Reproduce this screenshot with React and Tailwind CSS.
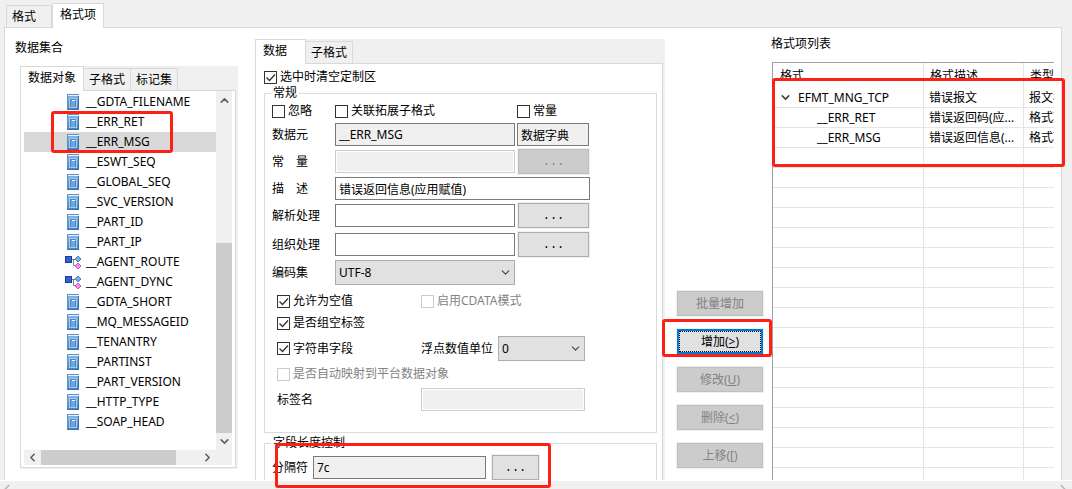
import { useState } from "react";
import { ChevronDown, ChevronLeft, ChevronRight, ChevronUp } from "lucide-react";
import clsx from "clsx";

const DATA_OBJECTS = [
  { name: "__GDTA_FILENAME" },
  { name: "__ERR_RET" },
  { name: "__ERR_MSG" },
  { name: "__ESWT_SEQ" },
  { name: "__GLOBAL_SEQ" },
  { name: "__SVC_VERSION" },
  { name: "__PART_ID" },
  { name: "__PART_IP" },
  { name: "__AGENT_ROUTE", node: true },
  { name: "__AGENT_DYNC", node: true },
  { name: "__GDTA_SHORT" },
  { name: "__MQ_MESSAGEID" },
  { name: "__TENANTRY" },
  { name: "__PARTINST" },
  { name: "__PART_VERSION" },
  { name: "__HTTP_TYPE" },
  { name: "__SOAP_HEAD" },
];

const FORMAT_ROWS = [
  { name: "EFMT_MNG_TCP", desc: "错误报文", type: "报文格式", root: true },
  { name: "__ERR_RET", desc: "错误返回码(应...", type: "格式项" },
  { name: "__ERR_MSG", desc: "错误返回信息(...", type: "格式项" },
];

const EMPTY_ROWS = Array.from({ length: 18 }, (_, i) => i);

function BookIcon() {
  return (
    <svg width="12" height="16" viewBox="0 0 12 16" aria-hidden="true">
      <defs>
        <linearGradient id="book" x1="0" y1="0" x2="0" y2="1">
          <stop offset="0" stopColor="#8abbe6" />
          <stop offset="1" stopColor="#4482c2" />
        </linearGradient>
      </defs>
      <rect width="12" height="16" fill="url(#book)" />
      <path d="M0 0.5h12" stroke="#5b93c9" />
      <path d="M1 1.5h11" stroke="#e8f3fc" />
      <path d="M0.5 0v16" stroke="#5a92ca" />
      <path d="M11.5 2v14M0 15.5h12" stroke="#3a72b0" />
      <rect x="2.5" y="4.5" width="7" height="9" fill="#6ba6dc" stroke="#a4cbee" />
      <path d="M3.5 13V5.5h5V13" fill="none" stroke="#4a86c4" />
      <path d="M5 6.5h3" stroke="#fff" />
    </svg>
  );
}

function NodeIcon() {
  return (
    <svg width="17" height="15" viewBox="0 0 17 15" aria-hidden="true">
      <path d="M7 4.5h3M8.5 4.5v6h2" stroke="#777f8c" fill="none" />
      <rect x="0.5" y="1.5" width="6" height="6" fill="#2f63d0" stroke="#17409c" />
      <path d="M13 1l3 3-3 3-3-3z" fill="#6db2ea" stroke="#2b6cab" strokeWidth="0.8" />
      <path d="M13 8l3 3-3 3-3-3z" fill="#ff8df0" stroke="#b93caa" strokeWidth="0.8" />
    </svg>
  );
}

function Tabs({ items, active, onChange, className }) {
  return (
    <div role="tablist" className={clsx("flex items-end bg-[#f0f0f0]", className)}>
      {items.map((item) => (
        <button
          key={item}
          role="tab"
          aria-selected={item === active}
          onClick={() => onChange(item)}
          className={clsx(
            "border border-b-0 border-[#d9d9d9] text-left",
            item === active
              ? "relative z-10 -mb-px h-[25px] min-w-[51px] bg-white px-[7px] pb-0.5"
              : "h-[22px] min-w-[46px] border-l-0 px-[5px] first:border-l"
          )}
        >
          {item}
        </button>
      ))}
    </div>
  );
}

function Checkbox({ label, defaultChecked, disabled, className }) {
  return (
    <label className={clsx("flex items-center gap-[3px]", disabled && "text-[#838383]", className)}>
      <span className="relative flex size-[13px]">
        <input
          type="checkbox"
          defaultChecked={defaultChecked}
          disabled={disabled}
          className="peer size-[13px] appearance-none border border-[#333] bg-white disabled:border-[#ccc]"
        />
        <svg
          viewBox="0 0 13 13"
          className="pointer-events-none absolute inset-0 hidden peer-checked:block"
          fill="none"
          stroke="#333"
          strokeWidth="1.3"
        >
          <path d="M2.5 6.5l3 3 5.5-6" />
        </svg>
      </span>
      {label}
    </label>
  );
}

function TextBox({ className, ...props }) {
  return (
    <input
      type="text"
      className={clsx(
        "h-[23px] min-w-0 border border-[#7a7a7a] bg-white px-[3px] read-only:bg-[#f0f0f0] disabled:border-[#ccc] disabled:bg-[#f0f0f0] disabled:shadow-[inset_0_0_0_1px_#fff]",
        className
      )}
      {...props}
    />
  );
}

function Combo({ id, value, className }) {
  return (
    <span className={clsx("relative flex", className)}>
      <select id={id} defaultValue={value} className="h-[25px] w-full appearance-none border border-[#adadad] bg-[#e1e1e1] px-[3px]">
        <option>{value}</option>
      </select>
      <ChevronDown size={13} strokeWidth={2} className="pointer-events-none absolute top-1.5 right-[3px] text-[#444]" />
    </span>
  );
}

function Button({ children, primary, className, ...props }) {
  return (
    <button
      className={clsx(
        "h-[25px] bg-[#e1e1e1] shadow-[0_0_0_1px_#f0f0f0] disabled:border-[#bfbfbf] disabled:bg-[#ccc] disabled:text-[#838383]",
        primary
          ? "border-2 border-[#0078d7] outline-1 -outline-offset-3 outline-dotted outline-black"
          : "border border-[#adadad]",
        className
      )}
      {...props}
    >
      {children}
    </button>
  );
}

function BrowseButton({ className, ...props }) {
  return (
    <Button aria-label="浏览" className={clsx("font-['Liberation_Mono',monospace]", className)} {...props}>
      ...
    </Button>
  );
}

function Field({ id, label, children }) {
  return (
    <div className="flex h-[27px] items-center">
      <label htmlFor={id} className="w-[63px] shrink-0">{label}</label>
      {children}
    </div>
  );
}

function DataSet() {
  const [tab, setTab] = useState("数据对象");
  const [selected, setSelected] = useState("__ERR_MSG");

  return (
    <section className="w-[223px] shrink-0 pt-3">
      <h2>数据集合</h2>
      <div className="mt-2.5 ml-[5px] bg-[#f0f0f0] pr-0.5 pb-px">
        <Tabs items={["数据对象", "子格式", "标记集"]} active={tab} onChange={setTab} className="h-6" />
        <div className="border border-[#d9d9d9] bg-white px-[3px] pb-0.5">
          <div className="flex">
            <ul className="min-w-0 flex-1 pt-px pb-[18px]">
              {DATA_OBJECTS.map(({ name, node }) => (
                <li key={name}>
                  <button
                    onClick={() => setSelected(name)}
                    className={clsx("flex h-5 w-full items-center pl-[41px]", selected === name && "bg-[#d9d9d9]")}
                  >
                    <span className="flex w-[21px] justify-start">
                      {node ? <NodeIcon /> : <span className="pl-0.5"><BookIcon /></span>}
                    </span>
                    {name}
                  </button>
                </li>
              ))}
            </ul>
            <div className="flex w-4 flex-col items-center bg-[#f0f0f0] text-[#606060]">
              <ChevronUp size={13} strokeWidth={3} className="mt-[3px]" />
              <div className="mt-auto h-[190px] w-full bg-[#cdcdcd]" />
              <ChevronDown size={13} strokeWidth={3} className="my-0.5" />
            </div>
          </div>
          <div className="flex h-[15px] items-center bg-[#f0f0f0] pr-[18px] text-[#606060]">
            <ChevronLeft size={13} strokeWidth={3} className="mx-0.5" />
            <div className="h-full w-[135px] bg-[#cdcdcd]" />
            <ChevronRight size={13} strokeWidth={3} className="ml-auto" />
          </div>
        </div>
      </div>
    </section>
  );
}

function ItemForm() {
  const [tab, setTab] = useState("数据");

  return (
    <section className="ml-[17px] min-w-0 flex-[410] pt-[11px]">
      <Tabs items={["数据", "子格式"]} active={tab} onChange={setTab} className="h-6" />
      <div className="bg-[#f0f0f0] pr-0.5">
        <div className="border border-[#d9d9d9] bg-white pt-[5px] pr-[5px] pl-2">
          <Checkbox label="选中时清空定制区" defaultChecked className="h-4" />
          <fieldset className="border border-[#dcdcdc] px-[7px] pb-[19px]">
            <legend className="-ml-px h-4 px-0.5">常规</legend>
            <div className="flex h-[20px] items-center">
              <Checkbox label="忽略" className="w-[63px]" />
              <Checkbox label="关联拓展子格式" className="w-[182px]" />
              <Checkbox label="常量" />
            </div>
            <Field id="element" label="数据元">
              <TextBox id="element" readOnly defaultValue="__ERR_MSG" className="w-[180px]" />
              <TextBox aria-label="来源" readOnly defaultValue="数据字典" className="ml-0.5 w-[72px]" />
            </Field>
            <Field id="constant" label="常　量">
              <TextBox id="constant" disabled className="w-[180px]" />
              <BrowseButton disabled className="ml-[3px] w-[71px]" />
            </Field>
            <Field id="desc" label="描　述">
              <TextBox id="desc" defaultValue="错误返回信息(应用赋值)" className="w-[255px]" />
            </Field>
            <Field id="parse" label="解析处理">
              <TextBox id="parse" className="w-[180px]" />
              <BrowseButton className="ml-[3px] w-[71px]" />
            </Field>
            <div className="mt-0.5">
              <Field id="compose" label="组织处理">
                <TextBox id="compose" className="w-[180px]" />
                <BrowseButton className="ml-[3px] w-[71px]" />
              </Field>
            </div>
            <div className="mt-px">
              <Field id="charset" label="编码集">
                <Combo id="charset" value="UTF-8" className="w-[180px]" />
              </Field>
            </div>
            <div className="mt-1 pl-[5px]">
              <div className="flex h-[22px] items-center">
                <Checkbox label="允许为空值" defaultChecked className="w-36" />
                <Checkbox label="启用CDATA模式" disabled />
              </div>
              <Checkbox label="是否组空标签" defaultChecked className="h-[22px]" />
              <div className="mt-px flex h-[27px] items-center">
                <Checkbox label="字符串字段" defaultChecked className="w-36" />
                <label htmlFor="unit" className="w-[77px]">浮点数值单位</label>
                <Combo id="unit" value="0" className="w-[87px]" />
              </div>
              <Checkbox label="是否自动映射到平台数据对象" disabled className="mt-px h-[22px]" />
              <div className="mt-px flex h-[27px] items-center">
                <label htmlFor="tag" className="w-36">标签名</label>
                <TextBox id="tag" disabled className="w-[164px]" />
              </div>
            </div>
          </fieldset>
          <fieldset className="mt-0.5 border border-[#dcdcdc] px-[7px] pb-4">
            <legend className="-ml-px h-4 px-0.5">字段长度控制</legend>
            <div className="mt-[3px] flex h-[27px] items-center">
              <label htmlFor="separator" className="w-[41px]">分隔符</label>
              <TextBox id="separator" readOnly defaultValue="7c" className="w-[173px]" />
              <BrowseButton className="ml-1.5 w-[47px]" />
            </div>
          </fieldset>
        </div>
      </div>
    </section>
  );
}

function Actions() {
  return (
    <div className="mt-[263px] ml-3 flex w-[86px] shrink-0 flex-col gap-[13px]">
      <Button disabled>批量增加</Button>
      <Button primary>增加(<u>&gt;</u>)</Button>
      <Button disabled>修改(<u>U</u>)</Button>
      <Button disabled>删除(<u>&lt;</u>)</Button>
      <Button disabled>上移(<u>[</u>)</Button>
    </div>
  );
}

function FormatList() {
  return (
    <section className="mr-[7px] ml-2 min-w-0 flex-[283] pt-2">
      <h2>格式项列表</h2>
      <div className="mt-2.5 ml-px overflow-hidden border-t border-l border-[#a0a0a0]">
        <table className="w-[351px] table-fixed border-separate border-spacing-0 text-left">
          <thead>
            <tr className="h-[25px]">
              <th className="w-[151px] border-r border-[#e5e5e5] pl-[7px] font-normal">格式</th>
              <th className="w-[100px] border-r border-[#e5e5e5] pl-1.5 font-normal">格式描述</th>
              <th className="w-[100px] pl-1.5 font-normal">类型</th>
            </tr>
          </thead>
          <tbody>
            {FORMAT_ROWS.map((row) => (
              <tr key={row.name} className="h-5 *:border-b *:border-[#e5e5e5] *:p-0 *:whitespace-nowrap">
                <td className="border-r">
                  <span className={clsx("flex items-center", row.root ? "pl-1.5" : "pl-11")}>
                    {row.root && <ChevronDown size={13} strokeWidth={3} className="mr-1.5 text-[#444]" />}
                    {row.name}
                  </span>
                </td>
                <td className="border-r"><span className="pl-[5px]">{row.desc}</span></td>
                <td><span className="pl-[5px]">{row.type}</span></td>
              </tr>
            ))}
            {EMPTY_ROWS.map((i) => (
              <tr key={i} className="h-5 *:border-b *:border-[#e5e5e5]">
                <td className="border-r" />
                <td className="border-r" />
                <td />
              </tr>
            ))}
          </tbody>
        </table>
      </div>
    </section>
  );
}

function Marker({ className }) {
  return <div className={clsx("pointer-events-none absolute z-20 rounded-[3px] border-3 border-[#ff2015]", className)} />;
}

export default function App() {
  const [tab, setTab] = useState("格式项");

  return (
    <div className="relative flex h-screen flex-col overflow-hidden bg-[#f0f0f0] font-['Noto_Sans','Noto_Sans_CJK_SC',sans-serif] text-[12px] leading-4 text-black">
      <Tabs items={["格式", "格式项"]} active={tab} onChange={setTab} className="h-[27px] shrink-0 pl-1.5" />
      <main className="mr-[10px] ml-1 flex min-h-0 flex-1 overflow-hidden border border-b-0 border-[#d9d9d9] bg-white pl-[10px]">
        <DataSet />
        <ItemForm />
        <Actions />
        <FormatList />
      </main>
      <footer className="flex h-[9px] shrink-0 items-start justify-between overflow-hidden border-t border-white text-[#b8b8b8]">
        <ChevronLeft size={14} strokeWidth={3} className="mt-px" />
        <ChevronRight size={14} strokeWidth={3} className="mt-px mr-0.5" />
      </footer>

      <Marker className="top-[111px] left-[51px] h-[42px] w-[122px]" />
      <Marker className="top-[319px] left-[662px] h-[38px] w-[110px]" />
      <Marker className="top-[443px] left-[275px] h-[45px] w-[276px]" />
      <Marker className="top-[78px] right-[7px] left-[772px] h-[89px]" />
    </div>
  );
}
